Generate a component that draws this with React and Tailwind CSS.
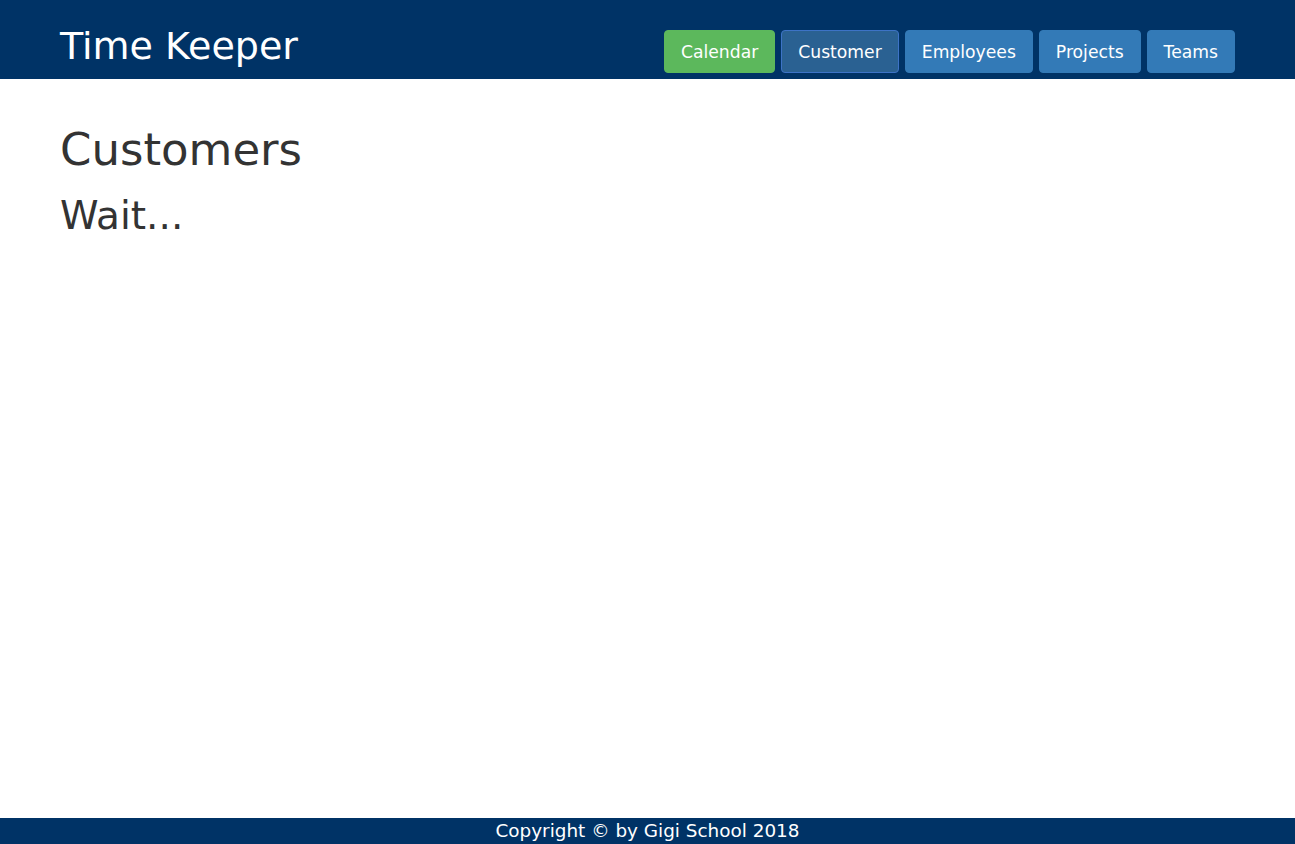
export default function App() {
  const font = { fontFamily: '"DejaVu Sans", Verdana, sans-serif' };
  const btns = [
    { label: "Calendar", cls: "bg-[#5cb85c] border-[#5cb85c]" },
    { label: "Customer", cls: "bg-[#2a6192] border-[#3d73c6]" },
    { label: "Employees", cls: "bg-[#337ab7] border-[#337ab7]" },
    { label: "Projects", cls: "bg-[#337ab7] border-[#337ab7]" },
    { label: "Teams", cls: "bg-[#337ab7] border-[#337ab7]" },
  ];
  return (
    <div className="min-h-[844px] flex flex-col bg-white" style={font}>
      <header className="h-[79px] bg-[#003366] flex items-start justify-between px-[60px]">
        <div className="text-white text-[38px] leading-none mt-[27px]">Time Keeper</div>
        <nav className="flex gap-[6px] mt-[30px]">
          {btns.map((b) => (
            <div
              key={b.label}
              className={`h-[43px] px-[16px] pt-[2px] flex items-center rounded-[4px] border text-white text-[17.2px] ${b.cls}`}
            >
              {b.label}
            </div>
          ))}
        </nav>
      </header>
      <main className="flex-1 px-[60px] text-[#333333]">
        <h1 className="text-[45px] leading-none mt-[48px]">Customers</h1>
        <h2 className="text-[39px] leading-none mt-[24px]">Wait...</h2>
      </main>
      <footer className="h-[26px] bg-[#003366] text-white text-[18.4px] flex items-center justify-center">
        Copyright © by Gigi School 2018
      </footer>
    </div>
  );
}
